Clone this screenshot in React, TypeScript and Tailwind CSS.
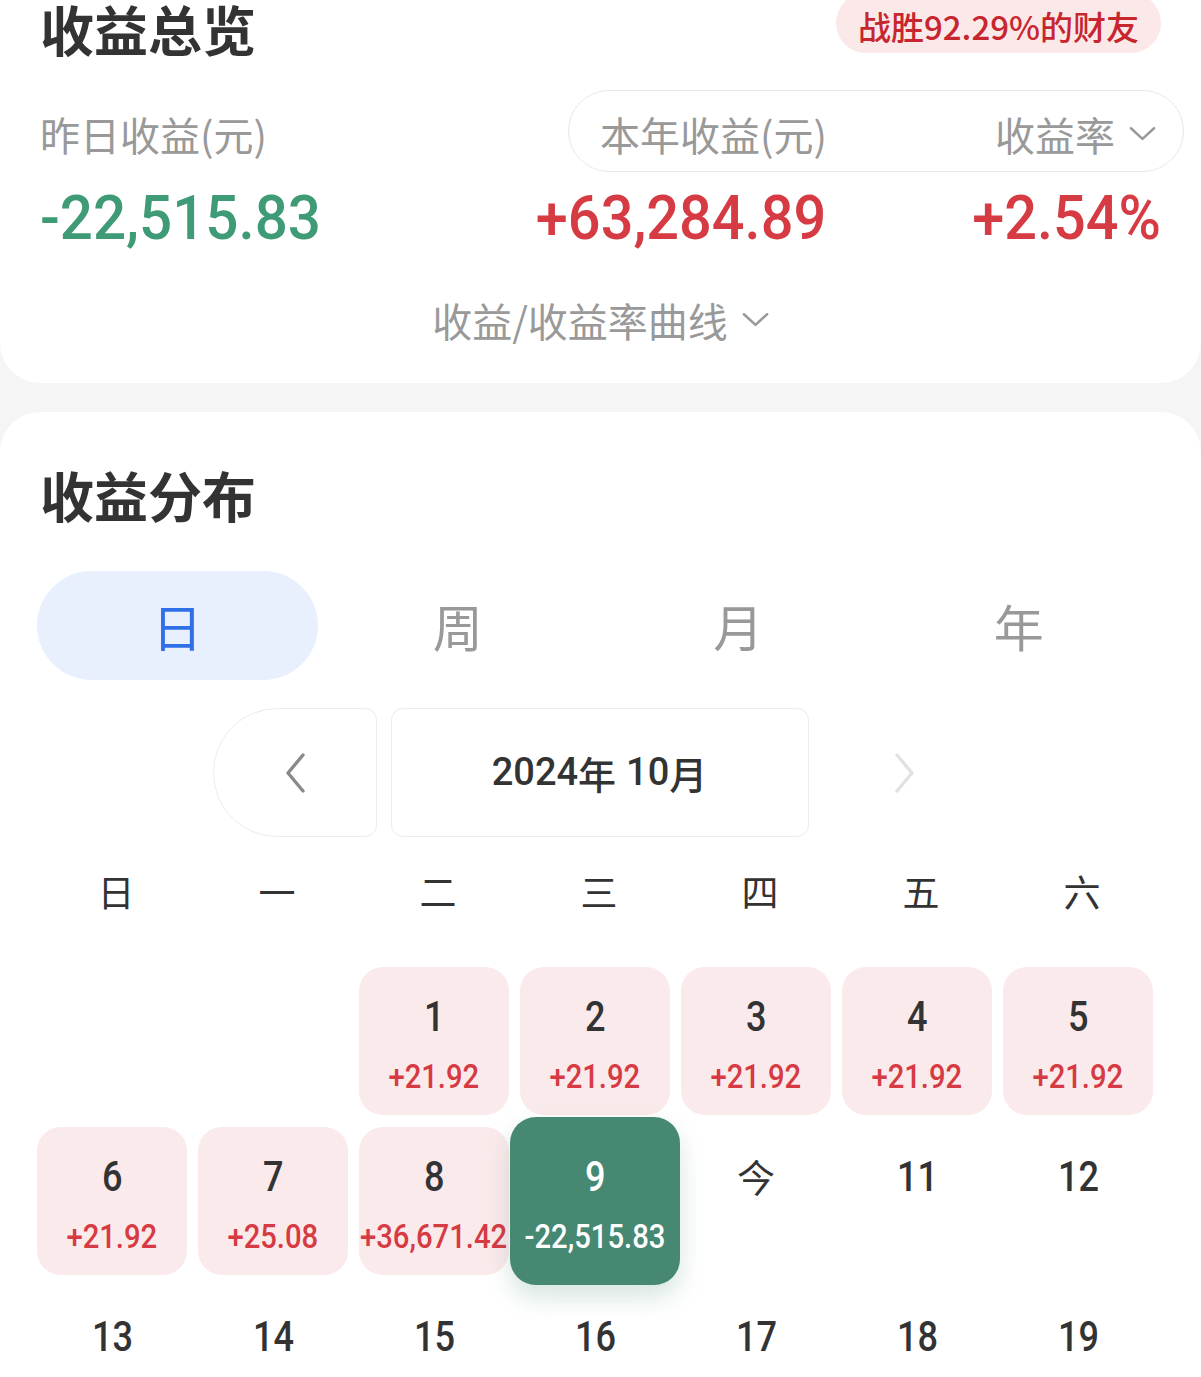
import React from 'react';

const cn = '"Noto Sans CJK SC", sans-serif';
const num = 'Roboto, "Noto Sans CJK SC", sans-serif';

const ChevronDown = ({className = ''}: {className?: string}) => (
  <svg viewBox="0 0 28 16" className={className} fill="none" stroke="currentColor" strokeWidth="2.6" strokeLinecap="round" strokeLinejoin="round">
    <polyline points="2,2 14,13 26,2" />
  </svg>
);

type Day = {label: string; value?: string; selected?: boolean};

const days: (Day | null)[] = [
  null,
  null,
  {label: '1', value: '+21.92'},
  {label: '2', value: '+21.92'},
  {label: '3', value: '+21.92'},
  {label: '4', value: '+21.92'},
  {label: '5', value: '+21.92'},
  {label: '6', value: '+21.92'},
  {label: '7', value: '+25.08'},
  {label: '8', value: '+36,671.42'},
  {label: '9', value: '-22,515.83', selected: true},
  {label: '今'},
  {label: '11'},
  {label: '12'},
  {label: '13'},
  {label: '14'},
  {label: '15'},
  {label: '16'},
  {label: '17'},
  {label: '18'},
  {label: '19'},
];

const weekdays = ['日', '一', '二', '三', '四', '五', '六'];
const tabs = ['日', '周', '月', '年'];

const DayCell = ({day}: {day: Day | null}) => {
  if (!day) return <div className="h-[148px]" />;
  const hasValue = !!day.value;
  const isText = day.label === '今';
  return (
    <div className="relative h-[148px]">
      {day.selected && (
        <div className="absolute -inset-[10px] rounded-[26px] bg-[#468872] shadow-[0_12px_24px_rgba(70,136,114,0.22)]" />
      )}
      {hasValue && !day.selected && <div className="absolute inset-0 rounded-[24px] bg-[#fbeaeb]" />}
      <div className="relative flex flex-col items-center">
        <div
          className={`mt-[29px] h-[40px] leading-[40px] whitespace-nowrap ${isText ? 'text-[38px]' : 'text-[43px] font-medium scale-x-[0.84]'} ${day.selected ? 'text-white' : 'text-[#333]'}`}
          style={{fontFamily: isText ? cn : num}}
        >
          {day.label}
        </div>
        {hasValue && (
          <div
            className={`mt-[20px] h-[40px] leading-[40px] text-[34px] font-medium scale-x-[0.86] whitespace-nowrap ${day.selected ? 'text-white' : 'text-[#d63a43]'}`}
            style={{fontFamily: num}}
          >
            {day.value}
          </div>
        )}
      </div>
    </div>
  );
};

export default function App() {
  return (
    <div className="w-[1201px] h-[1377px] overflow-hidden bg-[#f5f5f5]" style={{fontFamily: cn}}>
      {/* 收益总览 */}
      <div className="bg-white rounded-b-[40px] px-[40px] pb-[43px]">
        <div className="flex justify-between items-start h-[56px]">
          <div className="pt-[2px] text-[54px] leading-[54px] font-bold text-[#333]">收益总览</div>
          <div className="-mt-[7px] h-[60px] px-[22px] rounded-full bg-[#fbe9ea] flex items-center pt-[7px] text-[#c8262f] text-[33px] font-medium">
            战胜92.29%的财友
          </div>
        </div>
        <div className="mt-[34px] flex items-center h-[82px]">
          <div className="flex-1 text-[40px] text-[#999] pt-[6px]">昨日收益(元)</div>
          <div className="w-[616px] -mr-[23px] h-[82px] rounded-full border-[1.5px] border-[#e8e8e8] flex items-center justify-between pl-[31px] pr-[27px] pt-[6px]">
            <span className="text-[40px] text-[#999]">本年收益(元)</span>
            <span className="flex items-center gap-[14px] text-[40px] text-[#999]">
              收益率
              <ChevronDown className="w-[27px] h-[16px] text-[#999]" />
            </span>
          </div>
        </div>
        <div className="mt-[16px] grid grid-cols-[528px_258px_335px] h-[60px] items-center" style={{fontFamily: num}}>
          <div className="flex">
            <span className="inline-block origin-left scale-x-[0.94] text-[62px] leading-[60px] font-medium text-[#3f9a76] whitespace-nowrap">-22,515.83</span>
          </div>
          <div className="flex justify-end">
            <span className="inline-block origin-right scale-x-[0.93] text-[62px] leading-[60px] font-medium text-[#d63a43] whitespace-nowrap">+63,284.89</span>
          </div>
          <div className="flex justify-end">
            <span className="inline-block origin-right scale-x-[0.93] text-[62px] leading-[60px] font-medium text-[#d63a43] whitespace-nowrap">+2.54%</span>
          </div>
        </div>
        <div className="mt-[52px] flex items-center justify-center gap-[14px] h-[40px] text-[40px] text-[#999]">
          <span>收益/收益率曲线</span>
          <ChevronDown className="w-[27px] h-[16px] text-[#999]" />
        </div>
      </div>

      {/* 收益分布 */}
      <div className="mt-[29px] bg-white rounded-t-[40px] h-[1000px] pt-[55px]">
        <div className="px-[40px] text-[54px] leading-[56px] font-bold text-[#333]">收益分布</div>

        <div className="mt-[48px] ml-[37px] w-[1122px] grid grid-cols-4 h-[109px]">
          {tabs.map((t, i) => (
            <div
              key={t}
              className={`flex items-center justify-center rounded-[55px] text-[50px] ${i === 0 ? 'bg-[#e8f0fe] text-[#2f6fe8]' : 'text-[#999]'}`}
            >
              {t}
            </div>
          ))}
        </div>

        <div className="mt-[28px] flex justify-center gap-[14px] h-[129px] pr-[2px]">
          <div className="w-[164px] rounded-l-[66px] rounded-r-[12px] border-[1.5px] border-[#ececec] flex items-center justify-center">
            <svg viewBox="0 0 24 42" className="w-[24px] h-[42px]" fill="none" stroke="#8a8a8a" strokeWidth="3.4" strokeLinecap="round" strokeLinejoin="round">
              <polyline points="20,3 5,21 20,39" />
            </svg>
          </div>
          <div className="w-[418px] rounded-[12px] border-[1.5px] border-[#ececec] flex items-center justify-center text-[38px] font-medium text-[#333]">
            <span style={{fontFamily: num}}>2024</span>
            <span>年</span>
            <span className="ml-[10px]" style={{fontFamily: num}}>10</span>
            <span>月</span>
          </div>
          <div className="w-[164px] flex items-center justify-center">
            <svg viewBox="0 0 24 42" className="w-[24px] h-[42px]" fill="none" stroke="#e2e2e2" strokeWidth="3.4" strokeLinecap="round" strokeLinejoin="round">
              <polyline points="4,3 19,21 4,39" />
            </svg>
          </div>
        </div>

        <div className="mt-[34px] ml-[41px] w-[1116px] grid grid-cols-7 gap-x-[11px] h-[40px]">
          {weekdays.map(w => (
            <div key={w} className="text-center text-[37px] leading-[40px] text-[#333]">
              {w}
            </div>
          ))}
        </div>

        <div className="mt-[56px] ml-[37px] w-[1116px] grid grid-cols-7 gap-x-[11px] gap-y-[12px]">
          {days.map((d, i) => (
            <DayCell key={i} day={d} />
          ))}
        </div>
      </div>
    </div>
  );
}
